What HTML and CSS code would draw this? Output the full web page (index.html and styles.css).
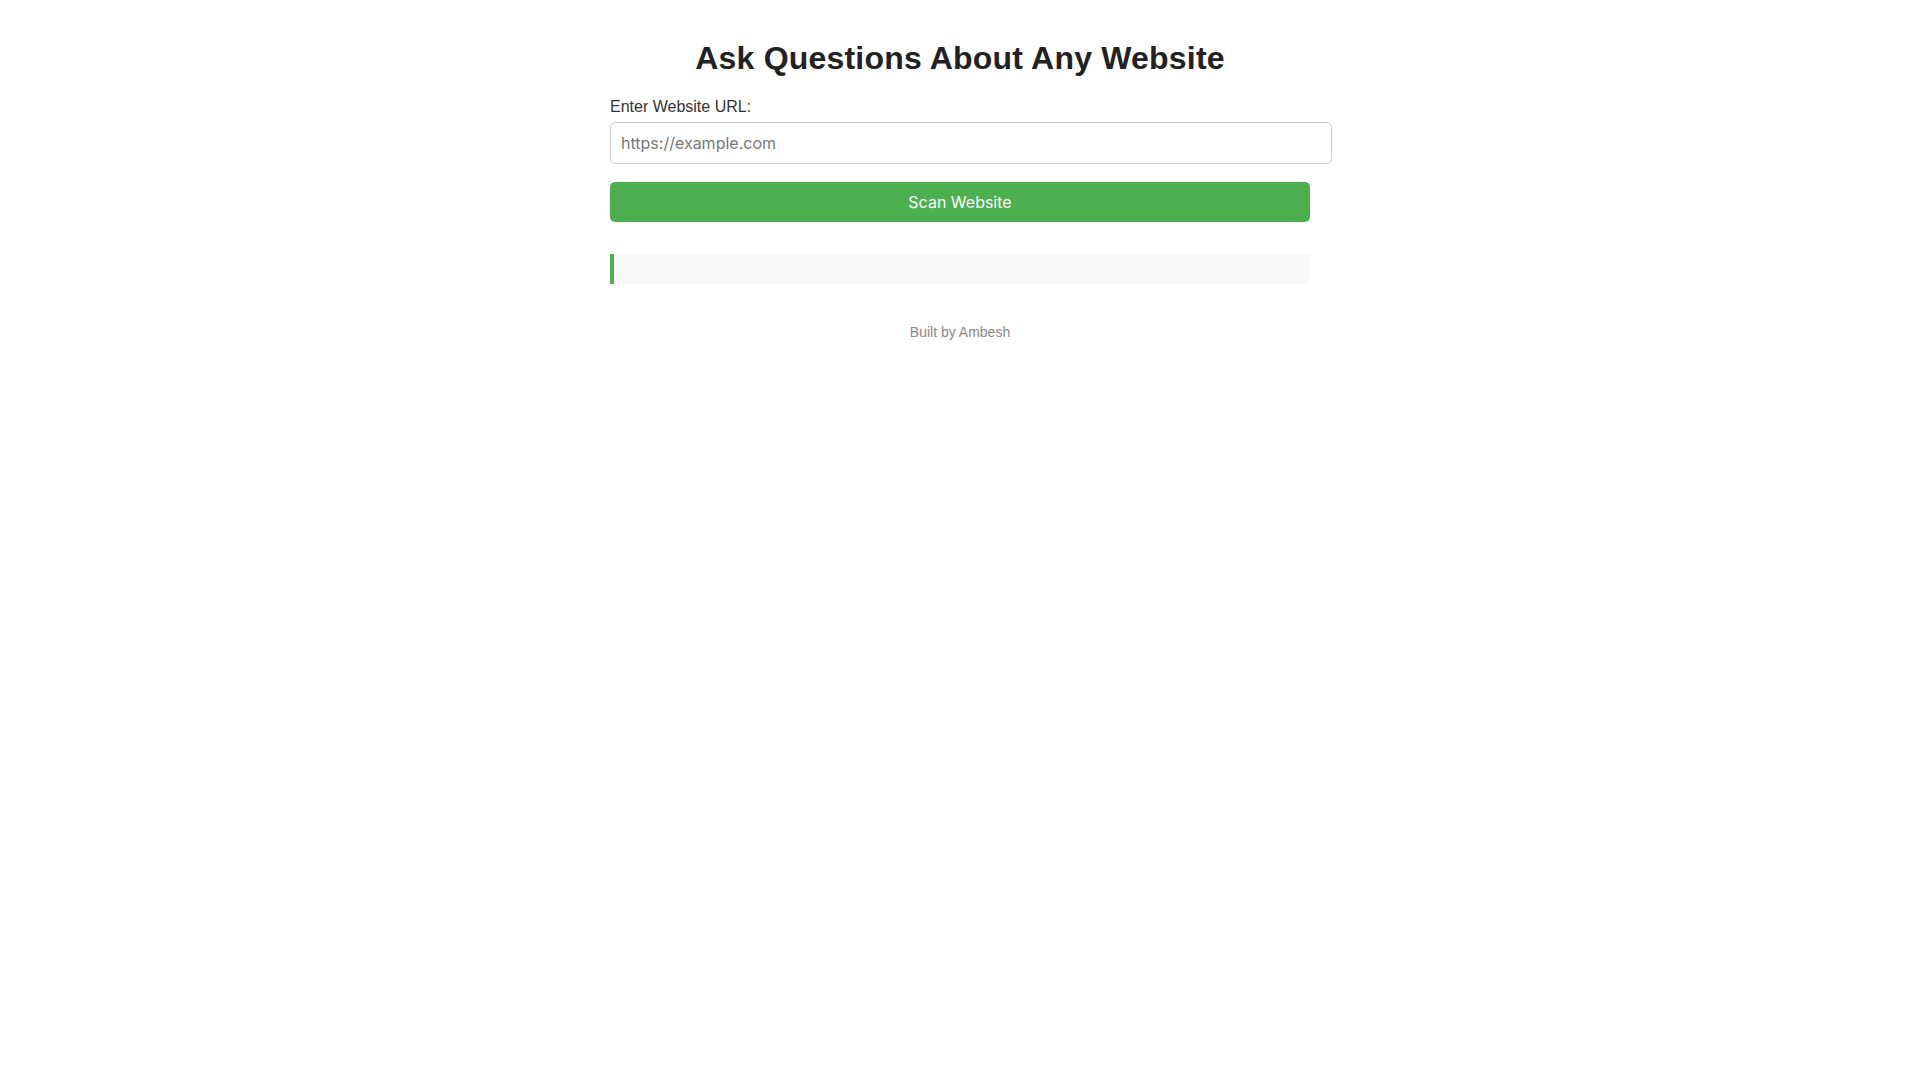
FILE: index.html
```html
<!DOCTYPE html>
<html lang="en">
<head>
<meta charset="utf-8">
<title>Ask Questions About Any Website</title>
<link rel="stylesheet" href="styles.css">
</head>
<body>
<main class="container">
  <h1 class="title">Ask Questions About Any Website</h1>
  <label class="label" for="url">Enter Website URL:</label>
  <input class="url-input" id="url" type="text" placeholder="https://example.com">
  <button class="scan-btn" type="button">Scan Website</button>
  <div class="output"></div>
  <footer class="footer">Built by Ambesh</footer>
</main>
</body>
</html>
```

FILE: styles.css
```css
html, body {
  margin: 0;
  padding: 0;
  background: #ffffff;
}

body {
  font-family: "Liberation Sans", Arial, sans-serif;
  color: #333;
}

.container {
  max-width: 700px;
  margin: 0 auto;
  padding-top: 18px;
}

.title {
  font-size: 32px;
  font-weight: bold;
  color: #222;
  text-align: center;
  margin: 22px 0 21px;
  line-height: normal;
  letter-spacing: 0.2px;
}

.label {
  display: block;
  font-size: 16px;
  color: #333;
  margin-bottom: 6px;
}

.url-input {
  display: block;
  width: 100%;
  padding: 10px;
  border: 1px solid #ccc;
  border-radius: 5px;
  font-family: Inter, "Noto Sans", sans-serif;
  font-size: 16px;
  color: #333;
  margin: 0 0 18px;
  outline: none;
}

.url-input::placeholder {
  color: #777;
}

.scan-btn {
  display: block;
  width: 100%;
  padding: 10px;
  border: none;
  border-radius: 5px;
  background: #4caf50;
  color: #fff;
  font-family: Inter, "Noto Sans", sans-serif;
  font-size: 16px;
  cursor: pointer;
}

.output {
  margin-top: 32px;
  padding: 15px;
  background: #f9f9f9;
  border-left: 4px solid #4caf50;
}

.footer {
  margin-top: 40px;
  text-align: center;
  font-size: 14px;
  color: #888;
}
```
